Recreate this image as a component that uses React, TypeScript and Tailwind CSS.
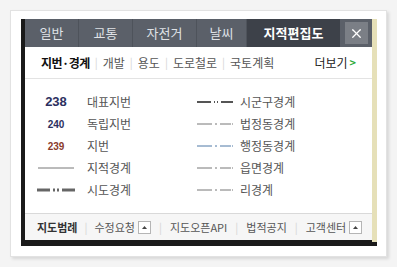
import { X } from 'lucide-react'

const tabs = ['일반', '교통', '자전거', '날씨']
const tabWidths = ['w-[54px]', 'w-[54px]', 'w-[64px]', 'w-[50px]']

const ko = { fontFamily: '"Noto Sans CJK KR", "Noto Sans", sans-serif' }

function Line({ kind }: { kind: string }) {
  if (kind === 'solid')
    return <svg width="36" height="6"><line x1="0" y1="3" x2="36" y2="3" stroke="#777" strokeWidth="1" /></svg>
  if (kind === 'thick')
    return (
      <svg width="38" height="6">
        <line x1="0" y1="3" x2="13" y2="3" stroke="#666" strokeWidth="3" />
        <line x1="16" y1="3" x2="18" y2="3" stroke="#666" strokeWidth="3" />
        <line x1="20" y1="3" x2="22" y2="3" stroke="#666" strokeWidth="3" />
        <line x1="25" y1="3" x2="38" y2="3" stroke="#666" strokeWidth="3" />
      </svg>
    )
  if (kind === 'mid')
    return (
      <svg width="36" height="6">
        <line x1="0" y1="3" x2="14" y2="3" stroke="#555" strokeWidth="2" />
        <line x1="17" y1="3" x2="18" y2="3" stroke="#555" strokeWidth="2" />
        <line x1="20" y1="3" x2="21" y2="3" stroke="#555" strokeWidth="2" />
        <line x1="24" y1="3" x2="36" y2="3" stroke="#555" strokeWidth="2" />
      </svg>
    )
  const c = kind === 'blue' ? '#4f79a6' : '#777'
  return (
    <svg width="36" height="6">
      <line x1="0" y1="3" x2="15" y2="3" stroke={c} strokeWidth="1" />
      <line x1="18" y1="3" x2="20" y2="3" stroke={c} strokeWidth="1" />
      <line x1="23" y1="3" x2="34" y2="3" stroke={c} strokeWidth="1" />
      <line x1="35" y1="3" x2="36" y2="3" stroke={c} strokeWidth="1" />
    </svg>
  )
}

function UpBtn() {
  return (
    <span className="inline-flex items-center justify-center w-[13px] h-[13px] border border-[#b5b5b5] bg-white ml-[3px]">
      <svg width="5" height="3"><polygon points="0,3 5,3 2.5,0" fill="#444" /></svg>
    </span>
  )
}

const Sep = ({ m = 'mx-[7px]' }: { m?: string }) => <span className={`text-[#d5d5d5] text-[11px] ${m}`}>|</span>

export default function App() {
  const num = { fontFamily: '"Liberation Sans", sans-serif' }
  const left: [React.ReactNode, string][] = [
    [<span className="text-[13px] font-bold text-[#2c3060]" style={num}>238</span>, '대표지번'],
    [<span className="text-[10px] font-bold text-[#2c3060]" style={num}>240</span>, '독립지번'],
    [<span className="text-[10px] font-bold text-[#8a3b2c]" style={num}>239</span>, '지번'],
    [<Line kind="solid" />, '지적경계'],
    [<Line kind="thick" />, '시도경계'],
  ]
  const right: [string, string][] = [
    ['mid', '시군구경계'],
    ['thin', '법정동경계'],
    ['blue', '행정동경계'],
    ['thin', '읍면경계'],
    ['thin', '리경계'],
  ]

  return (
    <div className="w-[397px] h-[267px] bg-[#f4f4f4] pt-[10px] pl-[10px]" style={ko}>
      <div className="w-[377px] h-[247px] bg-white border border-[#e2e2e2] shadow-[2px_2px_3px_rgba(0,0,0,0.12)] pt-[8px] pl-[10px]">
        <div className="flex w-[356px] h-[227px] bg-[#1a1a1a]">
          <div className="w-[4px]" />
          <div className="w-[347px] flex flex-col">
            <div className="flex h-[28px] bg-[#5b6069] text-[13px] text-white">
              {tabs.map((t, i) => (
                <div key={t} className={`${tabWidths[i]} flex items-center justify-center border-r border-[#4e535b]`}>
                  <span className="text-[#dfe2e6]">{t}</span>
                </div>
              ))}
              <div className="w-[93px] flex items-center justify-center bg-[#3d4149] font-bold">지적편집도</div>
              <div className="flex-1 flex items-center justify-center">
                <div className="w-[23px] h-[22px] bg-[#7b7f86] flex items-center justify-center">
                  <X className="w-[15px] h-[15px] text-white" strokeWidth={2} />
                </div>
              </div>
            </div>
            <div className="bg-white flex-1 flex flex-col">
              <div className="h-[32px] flex items-center px-[16px] border-b border-[#e3e3e3] text-[12px] text-[#555]">
                <span className="font-bold text-[#111] tracking-[-0.5px]">지번·경계</span>
                <Sep m="mx-[5px]" />
                <span>개발</span>
                <Sep m="mx-[5px]" />
                <span>용도</span>
                <Sep m="mx-[5px]" />
                <span>도로철로</span>
                <Sep m="mx-[5px]" />
                <span>국토계획</span>
                <span className="ml-auto text-[#222] flex items-center">
                  더보기<span className="text-[#2eab3a] font-bold text-[11px] ml-[2px]">&gt;</span>
                </span>
              </div>
              <div className="flex-1 flex pt-[12px] text-[12px] text-[#555]">
                <div className="w-[172px] flex flex-col">
                  {left.map(([icon, label], i) => (
                    <div key={i} className="h-[22px] flex items-center">
                      <div className="w-[62px] flex justify-center">{icon}</div>
                      <span>{label}</span>
                    </div>
                  ))}
                </div>
                <div className="flex flex-col">
                  {right.map(([k, label]) => (
                    <div key={label} className="h-[22px] flex items-center">
                      <div className="w-[43px]"><Line kind={k} /></div>
                      <span>{label}</span>
                    </div>
                  ))}
                </div>
              </div>
              <div className="h-[27px] bg-[#f6f6f6] border-t border-[#d9d9d9] flex items-center pl-[12px] text-[11px] text-[#555]">
                <span className="font-bold text-[#333]">지도범례</span>
                <Sep />
                <span>수정요청</span>
                <UpBtn />
                <Sep m="mx-[8px]" />
                <span>지도오픈API</span>
                <Sep m="mx-[8px]" />
                <span>법적공지</span>
                <Sep m="mx-[8px]" />
                <span>고객센터</span>
                <UpBtn />
              </div>
            </div>
            <div className="h-[6px]" />
          </div>
          <div className="w-[5px] bg-[#e6e0b8] mb-[4px]" />
        </div>
      </div>
    </div>
  )
}
